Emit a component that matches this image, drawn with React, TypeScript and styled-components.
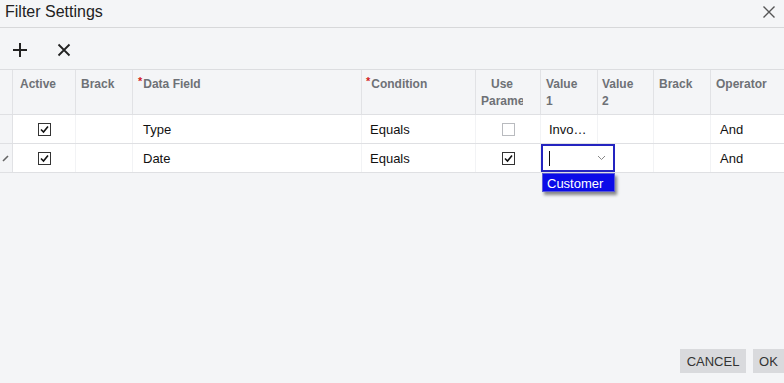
import React from "react";
import styled, { createGlobalStyle } from "styled-components";

const Global = createGlobalStyle`
  html, body { margin: 0; padding: 0; background: #f4f5f7; }
  body { font-family: "Liberation Sans", Arial, sans-serif; color: #111; overflow: hidden; }
  * { box-sizing: border-box; }
`;

const COLS = "13px 63px 57px 229px 114px 65px 57px 56px 57px 73px";

const Dialog = styled.div`
  width: 784px;
  height: 383px;
  display: flex;
  flex-direction: column;
  background: #f4f5f7;
`;

const TitleBar = styled.div`
  height: 28px;
  border-bottom: 1px solid #d7d8da;
  display: flex;
  align-items: center;
  justify-content: space-between;
  padding: 0 8px 3px 5px;
`;

const Title = styled.div`
  font-size: 16px;
  color: #222;
`;

const IconButton = styled.button<{ $color?: string }>`
  border: 0;
  background: transparent;
  padding: 0;
  display: flex;
  align-items: center;
  justify-content: center;
  cursor: pointer;
  color: ${(p) => p.$color || "#222"};
`;

const Toolbar = styled.div`
  height: 41px;
  display: flex;
  align-items: center;
  gap: 29px;
  padding: 2px 0 0 12px;
`;

const Table = styled.div`
  border-top: 1px solid #dcdde0;
  position: relative;
`;

const Row = styled.div<{ $header?: boolean }>`
  display: grid;
  grid-template-columns: ${COLS};
  height: ${(p) => (p.$header ? "45px" : "29px")};
  border-bottom: 1px solid #dfe0e3;
  background: ${(p) => (p.$header ? "#f4f5f7" : "#fff")};
`;

const Gutter = styled.div`
  background: #f4f5f7;
  border-right: 1px solid #e1e2e5;
  display: flex;
  align-items: center;
  justify-content: center;
  padding-right: 2px;
`;

const HeadCell = styled.div<{ $pl?: number; $pr?: number }>`
  border-right: 1px solid #e1e2e5;
  padding: 6px ${(p) => p.$pr ?? 10}px 0 ${(p) => p.$pl ?? 5}px;
  font-size: 12px;
  font-weight: bold;
  color: #6e7176;
  line-height: 17px;
  overflow: hidden;
  &:last-child { border-right: 0; }
`;

const CenterHead = styled(HeadCell)`
  text-align: center;
`;

const HeadClip = styled.div`
  width: 42px;
  overflow: hidden;
  white-space: nowrap;
`;

const Req = styled.span`
  color: #d21f1f;
  font-size: 11px;
  position: relative;
  top: -3px;
  margin-right: 1px;
`;

const Cell = styled.div<{ $pl?: number; $center?: boolean }>`
  border-right: 1px solid #f2f3f5;
  padding-left: ${(p) => p.$pl ?? 8}px;
  display: flex;
  align-items: center;
  justify-content: ${(p) => (p.$center ? "center" : "flex-start")};
  font-size: 13px;
  color: #111;
  white-space: nowrap;
  overflow: hidden;
  &:last-child { border-right: 0; }
`;

const Box = styled.span<{ $checked?: boolean }>`
  width: 13px;
  height: 13px;
  border: 1px solid ${(p) => (p.$checked ? "#333" : "#b9bbbf")};
  background: #fff;
  display: flex;
  align-items: center;
  justify-content: center;
`;

const Editor = styled.div`
  position: absolute;
  left: 541px;
  top: 74px;
  width: 74px;
  height: 28px;
  background: #fff;
  border: 2px solid #2424c0;
  display: flex;
  align-items: center;
  justify-content: space-between;
  padding: 0 7px 0 6px;
`;

const Caret = styled.span`
  width: 1px;
  height: 15px;
  background: #111;
`;

const DropList = styled.div`
  position: absolute;
  left: 542px;
  top: 103px;
  width: 73px;
  height: 19px;
  background: #0b0be8;
  color: #fff;
  font-size: 13px;
  padding: 2px 0 0 4px;
  box-shadow: 2px 3px 3px rgba(0, 0, 0, 0.45);
  border: 1px solid #5a5ad8;
`;

const Spacer = styled.div`
  flex: 1;
`;

const Footer = styled.div`
  display: flex;
  justify-content: flex-end;
  gap: 7px;
  padding: 0 0 10px 0;
`;

const Btn = styled.button<{ $w: number }>`
  width: ${(p) => p.$w}px;
  height: 24px;
  border: 0;
  background: #d9dadd;
  color: #333;
  font-family: "Liberation Sans", Arial, sans-serif;
  font-size: 13px;
  padding: 0;
  display: flex;
  align-items: center;
  justify-content: center;
`;

const Check = () => (
  <svg width="11" height="11" viewBox="0 0 11 11">
    <path d="M2 5.5 L4.5 8 L9 2.5" fill="none" stroke="#111" strokeWidth="1.6" />
  </svg>
);

export default function App() {
  return (
    <Dialog>
      <Global />
      <TitleBar>
        <Title>Filter Settings</Title>
        <IconButton $color="#555">
          <svg width="14" height="14" viewBox="0 0 14 14">
            <path d="M1.5 1.5 L12.5 12.5 M12.5 1.5 L1.5 12.5" stroke="#555" strokeWidth="1.4" />
          </svg>
        </IconButton>
      </TitleBar>
      <Toolbar>
        <IconButton>
          <svg width="16" height="16" viewBox="0 0 16 16">
            <path d="M8 1 V15 M1 8 H15" stroke="#222" strokeWidth="2" />
          </svg>
        </IconButton>
        <IconButton>
          <svg width="14" height="14" viewBox="0 0 14 14">
            <path d="M1.5 1.5 L12.5 12.5 M12.5 1.5 L1.5 12.5" stroke="#222" strokeWidth="1.8" />
          </svg>
        </IconButton>
      </Toolbar>
      <Table>
        <Row $header>
          <Gutter />
          <HeadCell $pl={7}>Active</HeadCell>
          <HeadCell>Brack</HeadCell>
          <HeadCell>
            <Req>*</Req>Data Field
          </HeadCell>
          <HeadCell $pl={4}>
            <Req>*</Req>Condition
          </HeadCell>
          <CenterHead $pl={5} $pr={18}>
            <HeadClip>Use</HeadClip>
            <HeadClip>Parame</HeadClip>
          </CenterHead>
          <HeadCell>Value 1</HeadCell>
          <HeadCell $pl={4}>Value 2</HeadCell>
          <HeadCell>Brack</HeadCell>
          <HeadCell>Operator</HeadCell>
        </Row>
        <Row>
          <Gutter />
          <Cell $center $pl={0}>
            <Box $checked>
              <Check />
            </Box>
          </Cell>
          <Cell />
          <Cell $pl={10}>Type</Cell>
          <Cell>Equals</Cell>
          <Cell $center $pl={0}>
            <Box />
          </Cell>
          <Cell>Invo…</Cell>
          <Cell />
          <Cell />
          <Cell $pl={9}>And</Cell>
        </Row>
        <Row>
          <Gutter>
            <svg width="7" height="7" viewBox="0 0 7 7">
              <path d="M1 6 L6 1" stroke="#666" strokeWidth="1.6" />
            </svg>
          </Gutter>
          <Cell $center $pl={0}>
            <Box $checked>
              <Check />
            </Box>
          </Cell>
          <Cell />
          <Cell $pl={10}>Date</Cell>
          <Cell>Equals</Cell>
          <Cell $center $pl={0}>
            <Box $checked>
              <Check />
            </Box>
          </Cell>
          <Cell />
          <Cell />
          <Cell />
          <Cell $pl={9}>And</Cell>
        </Row>
        <Editor>
          <Caret />
          <svg width="9" height="6" viewBox="0 0 9 6">
            <path d="M1 1 L4.5 4.5 L8 1" fill="none" stroke="#888" strokeWidth="1" />
          </svg>
        </Editor>
        <DropList>Customer</DropList>
      </Table>
      <Spacer />
      <Footer>
        <Btn $w={66}>CANCEL</Btn>
        <Btn $w={31}>OK</Btn>
      </Footer>
    </Dialog>
  );
}
